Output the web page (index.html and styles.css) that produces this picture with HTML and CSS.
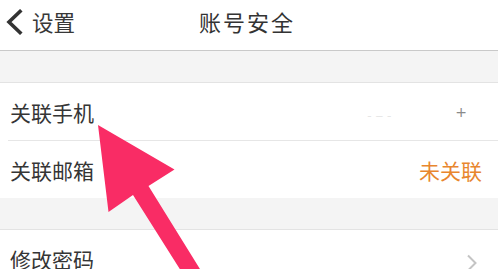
FILE: index.html
```html
<!DOCTYPE html>
<html lang="zh">
<head>
<meta charset="utf-8">
<link rel="stylesheet" href="styles.css">
</head>
<body>
<div class="page">
  <header class="nav">
    <div class="back">
      <svg class="back-icon" width="20" height="26" viewBox="0 0 20 26"><path d="M16 2.5 L5 13 L16 23.5" fill="none" stroke="#333" stroke-width="3.6" stroke-linecap="square"/></svg>
      <span class="back-text">设置</span>
    </div>
    <div class="title">账号安全</div>
  </header>
  <div class="gap gap-first"></div>
  <div class="group">
    <div class="row">
      <span class="label">关联手机</span>
      <span class="masked"><span class="m1">- ‒ -</span><span class="m2">+</span></span>
    </div>
    <div class="row">
      <span class="label">关联邮箱</span>
      <span class="value">未关联</span>
    </div>
  </div>
  <div class="gap"></div>
  <div class="group">
    <div class="row">
      <span class="label">修改密码</span>
      <svg class="chev" width="12" height="18" viewBox="0 0 12 18"><path d="M2 1.5 L9.5 9 L2 16.5" fill="none" stroke="#c4c4c4" stroke-width="2"/></svg>
    </div>
  </div>
  <svg class="arrow" width="498" height="269" viewBox="0 0 498 269">
    <polygon points="98,125 174.5,169.5 148.5,186 208,282 188,282 133,195 108.5,212" fill="#f92c65"/>
  </svg>
</div>
</body>
</html>
```
FILE: styles.css
```css
html, body {
  margin: 0;
  padding: 0;
  background: #fff;
}
.page {
  position: relative;
  width: 498px;
  height: 269px;
  overflow: hidden;
  font-family: "Noto Sans CJK SC", "Noto Sans", sans-serif;
  color: #333;
}
.nav {
  position: relative;
  height: 50px;
  border-bottom: 1px solid #c9c9c9;
  display: flex;
  align-items: center;
  background: #fff;
}
.back {
  display: flex;
  align-items: center;
  padding-left: 4px;
  margin-top: -6px;
}
.back-icon {
  display: block;
}
.back-text {
  font-size: 21.5px;
  line-height: 26px;
  margin-left: 8px;
  color: #383838;
}
.title {
  position: absolute;
  left: 0;
  right: 0;
  top: 7px;
  text-align: center;
  font-size: 22px;
  letter-spacing: 2px;
  line-height: 28px;
  padding-right: 4px;
  color: #333;
}
.gap {
  height: 31px;
  background: #f4f4f4;
  border-bottom: 1px solid #e3e3e3;
}
.group {
  background: #fff;
}
.row {
  height: 57px;
  display: flex;
  align-items: center;
  justify-content: space-between;
  margin-left: 8px;
  padding-left: 2px;
  padding-right: 16px;
  border-bottom: 1px solid #e6e6e6;
}
.group .row:last-child {
  border-bottom: none;
  margin-left: 0;
  padding-left: 10px;
}
.label {
  font-size: 21px;
  line-height: 26px;
  color: #353535;
}
.value {
  font-size: 21px;
  line-height: 26px;
  color: #e8862e;
}
.masked {
  display: flex;
  align-items: center;
  color: #e6e6e6;
  font-size: 12px;
  font-family: "DejaVu Sans", sans-serif;
}
.m1 {
  margin-right: 64px;
  margin-top: 8px;
}
.m2 {
  color: #8a8a8a;
  font-size: 14px;
  margin-right: 15px;
}
.chev {
  display: block;
  margin-top: 8px;
  margin-right: 4px;
}
.arrow {
  position: absolute;
  left: 0;
  top: 0;
  pointer-events: none;
}
```
